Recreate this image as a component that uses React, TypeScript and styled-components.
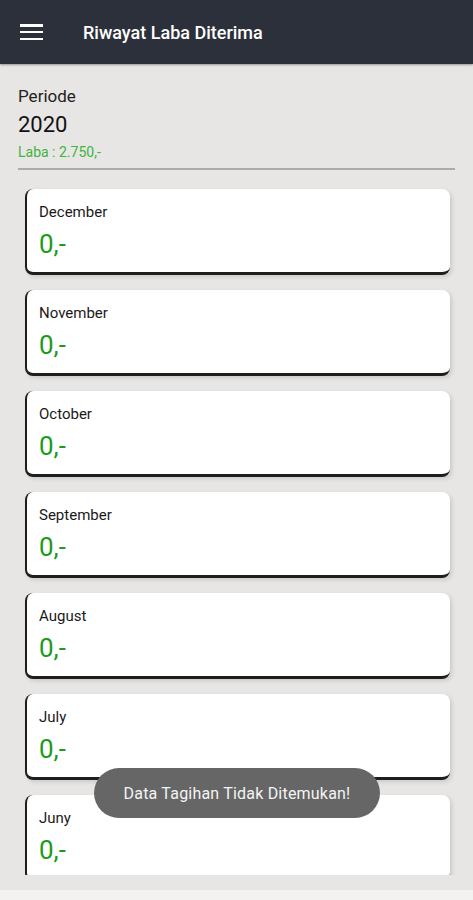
import React from 'react';
import styled, { createGlobalStyle } from 'styled-components';

const GlobalStyle = createGlobalStyle`
  *, *::before, *::after {
    box-sizing: border-box;
  }
  html, body {
    margin: 0;
    padding: 0;
    background: #e8e6e4;
    font-family: Roboto, 'Noto Sans', 'Liberation Sans', sans-serif;
  }
`;

const Screen = styled.div`
  position: relative;
  display: flex;
  flex-direction: column;
  width: 473px;
  height: 900px;
  overflow: hidden;
  background: #e8e6e4;
`;

const AppBar = styled.header`
  display: flex;
  align-items: center;
  gap: 40px;
  height: 64px;
  padding: 0 20px;
  background: #2c303a;
  box-shadow: 0 1px 2px rgba(0, 0, 0, 0.35);
  flex-shrink: 0;
`;

const MenuButton = styled.div`
  display: flex;
  flex-direction: column;
  justify-content: space-between;
  width: 23px;
  height: 16px;

  span {
    display: block;
    height: 2.5px;
    background: #ffffff;
  }
`;

const Title = styled.h1`
  margin: 0;
  font-size: 18px;
  font-weight: 500;
  color: #ffffff;
`;

const Summary = styled.section`
  display: flex;
  flex-direction: column;
  padding: 23px 18px 0;
  flex-shrink: 0;
`;

const PeriodLabel = styled.div`
  font-size: 17px;
  line-height: 19px;
  color: #222222;
`;

const PeriodYear = styled.div`
  margin-top: 6px;
  font-size: 22px;
  line-height: 26px;
  color: #111111;
`;

const Profit = styled.div`
  margin-top: 6px;
  font-size: 14px;
  line-height: 17px;
  color: #3fb43f;
`;

const Divider = styled.hr`
  margin: 7px 0 0;
  border: none;
  height: 2px;
  background: #acacac;
`;

const List = styled.div`
  display: flex;
  flex-direction: column;
  gap: 15px;
  height: 694px;
  margin-top: 11px;
  padding: 8px 23px 0 25px;
  overflow: hidden;
  flex-shrink: 0;
`;

const Card = styled.div`
  flex-shrink: 0;
  display: flex;
  flex-direction: column;
  height: 86px;
  padding: 15px 12px 0 12px;
  background: #ffffff;
  border-radius: 8px;
  border-left: 2px solid #1e1e1e;
  border-bottom: 3px solid #1e1e1e;
  box-shadow: 2px 2px 4px rgba(0, 0, 0, 0.12);
`;

const Month = styled.div`
  font-size: 15px;
  line-height: 17px;
  color: #1a1a1a;
`;

const Amount = styled.div`
  margin-top: 8px;
  font-size: 26px;
  line-height: 30px;
  color: #1c9a1c;
`;

const BottomBar = styled.div`
  margin-top: auto;
  height: 10px;
  background: #f3f2f1;
`;

const Toast = styled.div`
  position: absolute;
  left: 94px;
  top: 768px;
  width: 286px;
  height: 50px;
  display: flex;
  align-items: center;
  justify-content: center;
  border-radius: 25px;
  background: #666666;
  color: #f4f4f4;
  font-size: 16px;
  letter-spacing: 0.2px;
`;

const months = ['December', 'November', 'October', 'September', 'August', 'July', 'Juny'];

export default function App() {
  return (
    <Screen>
      <GlobalStyle />
      <AppBar>
        <MenuButton>
          <span />
          <span />
          <span />
        </MenuButton>
        <Title>Riwayat Laba Diterima</Title>
      </AppBar>
      <Summary>
        <PeriodLabel>Periode</PeriodLabel>
        <PeriodYear>2020</PeriodYear>
        <Profit>Laba : 2.750,-</Profit>
        <Divider />
      </Summary>
      <List>
        {months.map((m) => (
          <Card key={m}>
            <Month>{m}</Month>
            <Amount>0,-</Amount>
          </Card>
        ))}
      </List>
      <BottomBar />
      <Toast>Data Tagihan Tidak Ditemukan!</Toast>
    </Screen>
  );
}
